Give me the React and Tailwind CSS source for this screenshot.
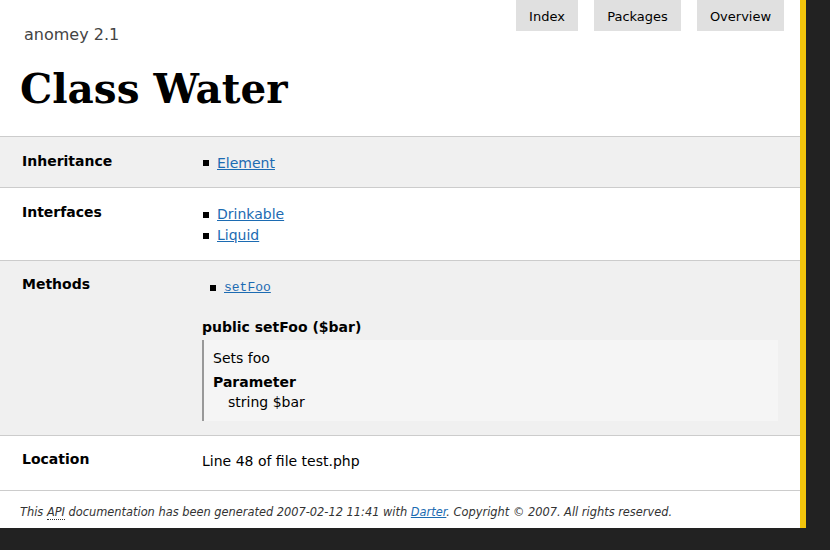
export default function App() {
  const sans = { fontFamily: '"DejaVu Sans", Verdana, sans-serif' };
  const link = "text-[#1c6bb2] underline";
  const Bullet = ({ children, className = "" }) => (
    <li className={"flex items-center gap-[8px] " + className}>
      <span className="inline-block w-[6px] h-[6px] bg-black" />
      {children}
    </li>
  );
  return (
    <div className="min-h-[550px] bg-[#222222]" style={sans}>
      <div className="w-[806px] bg-white border-r-[6px] border-[#f2c40c] text-[14px] text-black">
        <header className="relative h-[136px]">
          <div className="pt-[25px] pl-[24px] text-[16px] text-[#444] leading-[20px]">anomey 2.1</div>
          <h1
            className="pl-[20px] pt-[20px] text-[40.5px] font-bold leading-[48px] text-black"
            style={{ fontFamily: '"DejaVu Serif", Georgia, serif' }}
          >
            Class Water
          </h1>
          <nav className="absolute top-0 right-[16px] flex gap-[16px] text-[13px]">
            <a className="h-[31px] w-[62px] flex items-center justify-center pt-[2px] bg-[#e0e0e0] text-black">Index</a>
            <a className="h-[31px] w-[87px] flex items-center justify-center pt-[2px] bg-[#e0e0e0] text-black">Packages</a>
            <a className="h-[31px] w-[87px] flex items-center justify-center pt-[2px] bg-[#e0e0e0] text-black">Overview</a>
          </nav>
        </header>

        <section className="flex border-t border-[#cccccc] bg-[#f0f0f0] pt-[14px] pb-[14px] leading-[20px]">
          <div className="w-[202px] pl-[22px] font-bold">Inheritance</div>
          <ul className="pt-[2px] pl-[1px]">
            <Bullet><a className={link}>Element</a></Bullet>
          </ul>
        </section>

        <section className="flex border-t border-[#cccccc] bg-white pt-[14px] pb-[14px] leading-[21px]">
          <div className="w-[202px] pl-[22px] font-bold leading-[20px]">Interfaces</div>
          <ul className="pt-[2px] pl-[1px]">
            <Bullet><a className={link}>Drinkable</a></Bullet>
            <Bullet><a className={link}>Liquid</a></Bullet>
          </ul>
        </section>

        <section className="flex border-t border-[#cccccc] bg-[#f0f0f0] pt-[13px] pb-[14px] leading-[20px]">
          <div className="w-[202px] pl-[22px] font-bold shrink-0">Methods</div>
          <div className="flex-1 pr-[22px]">
            <ul className="pl-[8px] pt-[4px]">
              <Bullet>
                <a className={link + " text-[13px]"} style={{ fontFamily: '"Liberation Mono", "Courier New", monospace' }}>setFoo</a>
              </Bullet>
            </ul>
            <div className="mt-[19px] font-bold leading-[20px]">public setFoo ($bar)</div>
            <div className="mt-[3px] border-l-2 border-[#999999] bg-[#f5f5f5] pl-[9px] pt-[8px] pb-[9px]">
              <div className="leading-[20px]">Sets foo</div>
              <div className="mt-[4px] font-bold leading-[20px]">Parameter</div>
              <div className="pl-[15px] leading-[20px]">string $bar</div>
            </div>
          </div>
        </section>

        <section className="flex border-t border-[#cccccc] bg-white pt-[13px] pb-[19px] leading-[20px]">
          <div className="w-[202px] pl-[22px] font-bold">Location</div>
          <div className="pt-[2px]">Line 48 of file test.php</div>
        </section>

        <footer className="border-t border-[#cccccc] pl-[20px] pt-[12px] pb-[7px] text-[11.4px] italic text-[#333] leading-[18px]">
          This <abbr className="no-underline border-b border-dotted border-[#333]">API</abbr> documentation has been generated 2007-02-12 11:41 with{" "}
          <a className={link}>Darter</a>. Copyright © 2007. All rights reserved.
        </footer>
      </div>
    </div>
  );
}
